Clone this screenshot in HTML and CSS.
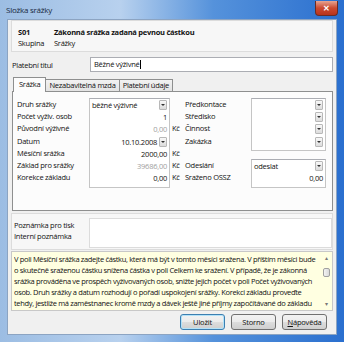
FILE: index.html
```html
<!DOCTYPE html>
<html lang="cs">
<head>
    <meta charset="UTF-8">
    <title>Složka srážky</title>
    <link rel="stylesheet" href="styles.css">
</head>
<body>

    <div class="window">
        <div class="titlebar">
            <span class="title">Složka srážky</span>
            <span class="close">&#x2715;</span>
        </div>

        <div class="client">
            <!-- header with code and group -->
            <div class="header">
                <div class="hrow"><b class="code">S01</b><b>Zákonná srážka zadaná pevnou částkou</b></div>
                <div class="hrow"><span class="code">Skupina</span><span>Srážky</span></div>
            </div>

            <div class="titlerow">
                <span class="lbl">Platební titul</span>
                <div class="field wide">Běžné výživné<span class="caret"></span></div>
            </div>

            <div class="tabs">
                <span class="tab active">Srážka</span>
                <span class="tab">Nezabavitelná mzda</span>
                <span class="tab">Platební údaje</span>
            </div>

            <div class="tabpanel">
                <div class="col left">
                    <div class="labels">
                        <span>Druh srážky</span>
                        <span>Počet vyživ. osob</span>
                        <span>Původní výživné</span>
                        <span>Datum</span>
                        <span>Měsíční srážka</span>
                        <span>Základ pro srážky</span>
                        <span>Korekce základu</span>
                    </div>
                    <div class="box inputs">
                        <div class="cell"><span>běžné výživné</span><i class="drop"></i></div>
                        <div class="cell num">1</div>
                        <div class="cell num gray">0,00</div>
                        <div class="cell num">10.10.2008<i class="drop"></i></div>
                        <div class="cell num">2000,00</div>
                        <div class="cell num gray">39686,00</div>
                        <div class="cell num">0,00</div>
                    </div>
                    <div class="units">
                        <span></span><span></span>
                        <span>Kč</span><span></span>
                        <span>Kč</span><span>Kč</span><span>Kč</span>
                    </div>
                </div>
                <div class="col right">
                    <div class="group">
                        <div class="labels">
                            <span>Předkontace</span>
                            <span>Středisko</span>
                            <span>Činnost</span>
                            <span>Zakázka</span>
                        </div>
                        <div class="box inputs">
                            <div class="cell"><i class="drop"></i></div>
                            <div class="cell"><i class="drop"></i></div>
                            <div class="cell"><i class="drop"></i></div>
                            <div class="cell"><i class="drop"></i></div>
                        </div>
                    </div>
                    <div class="group second">
                        <div class="labels">
                            <span>Odeslání</span>
                            <span>Sraženo OSSZ</span>
                        </div>
                        <div class="box inputs">
                            <div class="cell"><span>odeslat</span><i class="drop"></i></div>
                            <div class="cell num">0,00</div>
                        </div>
                    </div>
                </div>
            </div>

            <div class="notes">
                <div class="labels">
                    <span>Poznámka pro tisk</span>
                    <span>Interní poznámka</span>
                </div>
                <div class="notebox"></div>
            </div>

            <div class="help">
                <p>
                    <span>V poli Měsíční srážka zadejte částku, která má být v tomto měsíci sražena. V příštím měsíci bude</span>
                    <span>o skutečně sraženou částku snížena částka v poli Celkem ke sražení. V případě, že je zákonná</span>
                    <span>srážka prováděna ve prospěch vyživovaných osob, snižte jejich počet v poli Počet vyživovaných</span>
                    <span>osob. Druh srážky a datum rozhodují o pořadí uspokojení srážky. Korekci základu proveďte</span>
                    <span>tehdy, jestliže má zaměstnanec kromě mzdy a dávek ještě jiné příjmy započítávané do základu</span>
                </p>
                <div class="scroll">
                    <span class="arrow">&#x25B4;</span>
                    <span class="thumb"></span>
                    <span class="arrow">&#x25BE;</span>
                </div>
            </div>

            <div class="buttons">
                <button class="default">Uložit</button>
                <button>Storno</button>
                <button><u>N</u>ápověda</button>
            </div>
        </div>
    </div>

</body>
</html>
```

FILE: styles.css
```css
body {
    margin: 0;
    font-family: "Open Sans", "Noto Sans", sans-serif;
    font-size: 7.5px;
    letter-spacing: -0.25px;
    color: #111;
    background: #fff;
}
.window {
    width: 344px;
    height: 342px;
    box-sizing: border-box;
    padding: 0 7px 7px 7px;
    background: linear-gradient(to right, #9cbde3 0%, #b8d1ee 35%, #5592db 62%, #2a6fcf 100%);
    display: flex;
    flex-direction: column;
}
.titlebar {
    height: 19px;
    display: flex;
    align-items: center;
    justify-content: space-between;
}
.title {
    font-size: 8px;
    color: #1a2a40;
    margin-left: -1px;
}
.close {
    width: 23px;
    height: 15px;
    margin-top: -3px;
    margin-right: -1px;
    border: 1px solid #6b2c24;
    border-top: none;
    border-radius: 0 0 4px 4px;
    background: linear-gradient(#e7a593, #cc4a31 50%, #b7331c);
    color: #fff;
    font-size: 8px;
    font-weight: bold;
    display: flex;
    align-items: center;
    justify-content: center;
    box-sizing: border-box;
}
.client {
    flex: 1;
    background: #f0f0f0;
    border: 1px solid #8ca4c2;
    padding: 0 3px 0 3px;
    display: flex;
    flex-direction: column;
}
.header {
    height: 32px;
    box-sizing: border-box;
    background: #f7f7f7;
    border: 1px solid #dcdcdc;
    padding: 6px 0 0 6px;
}
.hrow {
    display: flex;
    line-height: 11px;
}
.code {
    width: 36px;
}
.hrow b {
    font-weight: bold;
}
.titlerow {
    display: flex;
    align-items: center;
    margin-top: 5px;
    height: 15px;
}
.lbl {
    width: 78px;
    padding-left: 1px;
}
.field {
    background: #fff;
    border: 1px solid #abadb3;
    height: 15px;
    box-sizing: border-box;
    padding-left: 3px;
    line-height: 13px;
}
.field.wide {
    flex: 1;
}
.caret {
    display: inline-block;
    width: 1px;
    height: 9px;
    background: #000;
    vertical-align: -2px;
}
.tabs {
    display: flex;
    margin-top: 5px;
    margin-left: 2px;
    height: 14px;
    align-items: flex-end;
}
.tab {
    height: 12px;
    line-height: 11px;
    padding: 0 3px;
    border: 1px solid #8e8f8f;
    border-bottom: none;
    border-left: none;
    background: linear-gradient(#f2f2f2, #e3e3e3);
    box-sizing: border-box;
}
.tab:first-child {
    border-left: 1px solid #8e8f8f;
}
.tab.active {
    height: 15px;
    line-height: 13px;
    background: #fcfcfc;
    padding: 0 5px;
    margin-bottom: -1px;
    position: relative;
}
.tabpanel {
    height: 120px;
    box-sizing: border-box;
    background: #fcfcfc;
    border: 1px solid #8e8f8f;
    margin-left: 1px;
    padding: 6px 8px 0 4px;
    display: flex;
}
.col {
    display: flex;
    flex-shrink: 0;
}
.labels {
    display: flex;
    flex-direction: column;
    flex-shrink: 0;
}
.labels span {
    height: 12.2px;
    line-height: 12.2px;
    white-space: nowrap;
}
.left .labels {
    width: 72px;
}
.box {
    border: 1px solid #c5c5c5;
    border-top-color: #abadb3;
    background: #fff;
    display: flex;
    flex-direction: column;
    padding: 0 2px;
    flex-shrink: 0;
    box-sizing: border-box;
}
.left .box {
    width: 81px;
    height: 90px;
}
.cell {
    height: 12.2px;
    line-height: 12.2px;
    display: flex;
    align-items: center;
    white-space: nowrap;
}
.cell.num {
    justify-content: flex-end;
}
.cell.gray {
    color: #a0a0a0;
}
.drop {
    width: 8px;
    height: 10px;
    margin-left: auto;
    border: 1px solid #b8b8b8;
    border-radius: 1px;
    box-sizing: border-box;
    background: linear-gradient(#f8f8f8, #dcdcdc);
    position: relative;
    flex-shrink: 0;
}
.cell.num .drop {
    margin-left: 2px;
}
.drop::after {
    content: "";
    position: absolute;
    left: 1px;
    top: 3px;
    border-left: 2px solid transparent;
    border-right: 2px solid transparent;
    border-top: 2px solid #333;
}
.units {
    display: flex;
    flex-direction: column;
    width: 15px;
    padding-left: 2px;
    box-sizing: border-box;
}
.units span {
    height: 12.2px;
    line-height: 12.2px;
}
.col.right {
    flex-direction: column;
}
.group {
    display: flex;
}
.right .labels {
    width: 66px;
}
.right .box {
    width: 75px;
}
.group .box {
    height: 53px;
}
.group.second {
    margin-top: 8px;
}
.group.second .box {
    height: 29px;
}
.notes {
    margin-top: 2px;
    height: 37px;
    box-sizing: border-box;
    border: 1px solid #dcdcdc;
    background: #f7f7f7;
    display: flex;
    padding: 4px 0 0 2px;
}
.notes .labels {
    width: 75px;
    margin-top: 2px;
}
.notes .labels span {
    height: 11px;
    line-height: 11px;
}
.notebox {
    flex: 1;
    background: #fff;
    border: 1px solid #dcdcdc;
    height: 30px;
    box-sizing: border-box;
}
.help {
    margin-top: 1px;
    height: 60px;
    box-sizing: border-box;
    border: 1px solid #c8c8c8;
    background: #ffffe1;
    display: flex;
    padding: 2px 1px 2px 2px;
}
.help p {
    margin: 0;
    flex: 1;
    display: flex;
    flex-direction: column;
    overflow: hidden;
    letter-spacing: -0.33px;
}
.help p span {
    line-height: 11px;
    white-space: nowrap;
}
.scroll {
    width: 10px;
    display: flex;
    flex-direction: column;
    align-items: center;
    margin-left: 2px;
}
.arrow {
    font-size: 6px;
    color: #777;
    line-height: 8px;
}
.thumb {
    width: 7px;
    height: 9px;
    margin-top: 6px;
    margin-bottom: auto;
    border: 1px solid #a0a0a0;
    border-radius: 2px;
    background: linear-gradient(to right, #f3f3f3, #dadada);
    box-sizing: border-box;
}
.buttons {
    display: flex;
    justify-content: flex-end;
    gap: 6px;
    margin-top: 3px;
    padding-right: 6px;
}
button {
    font-family: inherit;
    font-size: 7.5px;
    letter-spacing: -0.2px;
    color: #111;
    width: 45px;
    height: 16px;
    padding: 0;
    border: 1px solid #707070;
    border-radius: 3px;
    background: linear-gradient(#f2f2f2 0%, #ebebeb 50%, #dddddd 51%, #cfcfcf 100%);
}
button.default {
    border-color: #3c7fb1;
    box-shadow: inset 0 0 0 1px #b3e2f8;
}
```
